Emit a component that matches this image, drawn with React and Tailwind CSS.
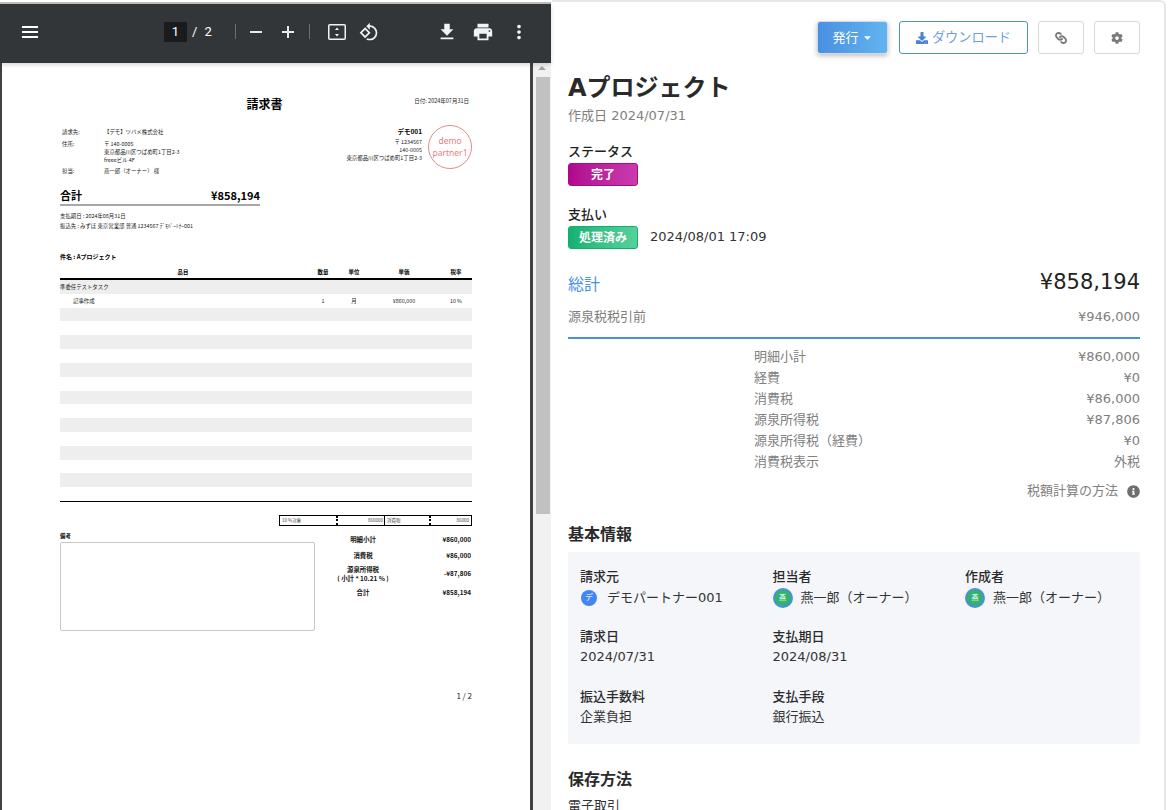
import React from "react";
import { FaDownload, FaLink, FaCog, FaInfoCircle, FaCaretDown } from "react-icons/fa";
import { MdFileDownload, MdPrint, MdMoreVert, MdRotate90DegreesCcw } from "react-icons/md";

const CJK = "font-['DejaVu_Sans','Noto_Sans_CJK_JP',sans-serif]";

function Toolbar() {
  return (
    <div className="h-[59px] pb-[4px] bg-[#323639] flex items-center text-white shrink-0 font-['Roboto','Noto_Sans_CJK_JP',sans-serif] relative z-10 shadow-[0_2px_4px_rgba(0,0,0,0.15)]">
      <svg className="ml-[22px] w-4 h-3" viewBox="0 0 16 12" fill="#fff">
        <rect width="16" height="2" /><rect y="5" width="16" height="2" /><rect y="10" width="16" height="2" />
      </svg>
      <div className="ml-[126px] w-[23px] h-5 bg-[#191b1c] flex items-center justify-center text-[13px]">1</div>
      <span className="ml-[5px] text-[13px]">/</span>
      <span className="ml-[7px] text-[13px]">2</span>
      <div className="ml-[23px] w-px h-[15px] bg-[#6b6f72]" />
      <svg className="ml-[14px] w-3 h-3" viewBox="0 0 12 12" fill="#e8eaed"><rect y="5" width="12" height="2" /></svg>
      <svg className="ml-5 w-3 h-3" viewBox="0 0 12 12" fill="#e8eaed"><rect y="5" width="12" height="2" /><rect x="5" width="2" height="12" /></svg>
      <div className="ml-[15px] w-px h-[15px] bg-[#6b6f72]" />
      <svg className="ml-[18px] w-[18px] h-4" viewBox="0 0 18 16" fill="none">
        <rect x="0.75" y="0.75" width="16.5" height="14.5" rx="1" stroke="#f1f3f4" strokeWidth="1.5" />
        <path d="M9 3.5l2 2.5H7zM9 12.5l2-2.5H7z" fill="#f1f3f4" />
      </svg>
      <MdRotate90DegreesCcw className="ml-[13px] text-[20px] text-[#f1f3f4]" />
      <MdFileDownload className="ml-[57px] text-[22px] text-[#f1f3f4]" />
      <MdPrint className="ml-[14px] text-[22px] text-[#f1f3f4]" />
      <MdMoreVert className="ml-[14px] text-[22px] text-[#f1f3f4]" />
    </div>
  );
}

function InvoiceTable() {
  const stripes = [0, 1, 2, 3, 4, 5, 6, 7, 8, 9, 10, 11, 12, 13, 14, 15];
  const cols = "grid grid-cols-[246px_34px_28px_72px_32px]";
  return (
    <div className="mt-[7px]">
      <div className={`${cols} text-[5.4px] font-bold text-center h-[9px] leading-[9px]`}>
        <span>品目</span><span>数量</span><span>単位</span><span>単価</span><span>税率</span>
      </div>
      <div className="h-[2px] bg-black mt-[1px]" />
      {stripes.map((i) => (
        <div key={i} className={`${cols} h-[13.82px] items-center text-[5.4px] text-center text-[#222] ${i % 2 === 0 ? "bg-[#eeeeee]" : "bg-white"}`}>
          {i === 0 && <span className="text-left">準委任テストタスク</span>}
          {i === 1 && (
            <>
              <span className="text-left pl-[13px]">記事作成</span>
              <span>1</span><span>月</span><span>¥860,000</span><span>10 %</span>
            </>
          )}
        </div>
      ))}
      <div className="h-[1px] bg-black" />
    </div>
  );
}

function TotalRow({ label, value, tall }) {
  return (
    <div className={`flex items-center ${tall ? "h-[20px]" : "h-[15px]"} mb-[1px] text-[6.4px] font-bold text-[#111]`}>
      <span className="w-[92px] text-center leading-[9px] whitespace-pre-line">{label}</span>
      <span className="flex-1 text-right">{value}</span>
    </div>
  );
}

function PdfPage() {
  return (
    <div className="w-[528px] ml-[2px] h-full bg-white px-[58px] pt-[34px] text-black overflow-hidden shrink-0 font-['Noto_Sans_CJK_JP','Noto_Sans',sans-serif]">
      <div className="relative h-[14px] text-center">
        <span className="text-[12px] leading-[14px] font-bold ml-[-1px] block mr-[2px]">請求書</span>
        <span className="absolute right-[3px] top-0 text-[5.5px] leading-[8px] text-[#222] whitespace-nowrap">日付: 2024年07月31日</span>
      </div>
      <div className="flex mt-[14px] h-[48px] text-[5.4px] leading-[8px] text-[#222]">
        <div className="w-[260px] pl-[2px] pt-[3px]">
          <div className="flex"><span className="w-[42px]">請求先:</span><span>【デモ】ツバメ株式会社</span></div>
          <div className="flex mt-[4px]"><span className="w-[42px]">住所:</span><span>〒 140-0005<br />東京都品川区つばめ町1丁目2-3<br />freeeビル 4F</span></div>
          <div className="flex mt-[3px]"><span className="w-[42px]">担当:</span><span>燕一郎（オーナー） 様</span></div>
        </div>
        <div className="w-[102px] text-right pt-[2px] whitespace-nowrap">
          <div className="text-[6.5px] font-bold leading-[9px] text-black mb-[2px]">デモ001</div>
          <div>〒 1234567</div><div>140-0005</div><div className="ml-[-40px]">東京都品川区つばめ町1丁目2-3</div>
        </div>
        <div className="ml-[6px] w-11 h-11 shrink-0 rounded-full border border-[#e08a8a] flex items-center justify-center text-center text-[8.5px] leading-[12px] text-[#e58080] font-['Noto_Sans',sans-serif]">demo<br />partner1</div>
      </div>
      <div className="w-[200px] mt-[15px] flex justify-between items-end border-b-2 border-[#a8a8a8] font-bold text-[11px] leading-[15px] pb-[1px]">
        <span>合計</span><span>¥858,194</span>
      </div>
      <div className="text-[5.4px] leading-[8px] mt-[6px] text-[#222]">支払期日 : 2024年08月31日</div>
      <div className="text-[5.4px] leading-[8px] mt-[2px] text-[#222]">振込先 : みずほ 東京営業部 普通 1234567 ﾃﾞﾓﾊﾟｰﾄﾅｰ001</div>
      <div className="text-[6px] leading-[9px] font-bold mt-[22px]">件名 : Aプロジェクト</div>
      <InvoiceTable />
      <div className="ml-[219px] mt-[13px] h-[11px] w-[193px] border border-black flex text-[4.5px] leading-[9px] text-[#444]">
        <div className="w-[105px] flex justify-between pl-[2px] pr-[1px] border-r border-black relative">
          <span>10 %対象</span><span>860000</span>
          <span className="absolute left-[56px] top-0 h-full border-l-2 border-dotted border-black" />
        </div>
        <div className="flex-1 flex justify-between pl-[2px] pr-[2px] relative">
          <span>消費税</span><span>86000</span>
          <span className="absolute left-[44px] top-0 h-full border-l-2 border-dotted border-black" />
        </div>
      </div>
      <div className="flex mt-[6px]">
        <div className="w-[255px]">
          <div className="text-[5.4px] leading-[8px] font-bold">備考</div>
          <div className="mt-[2px] h-[89px] border border-[#c8c8c8] rounded-[2px]" />
        </div>
        <div className="ml-[2px] flex-1 pr-[1px]">
          <TotalRow label="明細小計" value="¥860,000" />
          <TotalRow label="消費税" value="¥86,000" />
          <TotalRow label={"源泉所得税\n( 小計 * 10.21 % )"} value="-¥87,806" tall />
          <TotalRow label="合計" value="¥858,194" />
        </div>
      </div>
      <div className="text-right text-[8px] leading-[10px] mt-[60px] text-[#222]">1 / 2</div>
    </div>
  );
}

function Left() {
  return (
    <div className="w-[551px] shrink-0 flex flex-col h-full">
      <div className="h-[2px] bg-white shrink-0" />
      <div className="h-[2px] bg-[#bdbdbd] shrink-0" />
      <Toolbar />
      <div className="flex-1 flex bg-[#3f4245] min-h-0">
        <PdfPage />
        <div className="w-[18px] ml-[3px] bg-[#f1f1f1] flex flex-col items-center shrink-0">
          <div className="mt-[3px] w-0 h-0 border-x-[4px] border-x-transparent border-b-[4px] border-b-[#a3a3a3]" />
          <div className="mt-[7px] ml-[1px] w-[14px] h-[437px] bg-[#c1c1c1]" />
        </div>
      </div>
    </div>
  );
}

function Row({ label, value }) {
  return (
    <div className="flex justify-between h-[21px] leading-[21px] text-[13px] text-[#808080]">
      <span>{label}</span><span>{value}</span>
    </div>
  );
}

function Field({ label, avatar, children }) {
  return (
    <div className="h-[60px]">
      <div className="text-[13px] leading-[20px] font-medium text-[#2b2b2b]">{label}</div>
      <div className={`text-[13px] leading-[20px] text-[#333] flex items-center whitespace-nowrap ${avatar ? "h-[22px]" : "h-[20px]"}`}>{children}</div>
    </div>
  );
}

function GreenAvatar() {
  return (
    <span className="w-5 h-5 rounded-full bg-[#33b26e] border-2 border-[#4a8fe0] flex items-center justify-center text-[7px] leading-none text-white mr-[8px]">燕</span>
  );
}

function Right() {
  return (
    <div className={`ml-px w-[614px] shrink-0 h-full bg-white rounded-tr-md border-t-2 border-r-2 border-[#e6e7ea] pl-4 pr-6 overflow-hidden ${CJK}`}>
      <div className="flex justify-end mt-[19px] h-[33px] gap-[10px]">
        <button className="w-[71px] mr-px rounded-[3px] bg-gradient-to-r from-[#4a90e2] to-[#62b4ef] text-white text-[13px] flex items-center justify-center gap-[3px] shadow-[0_2px_5px_rgba(0,0,0,0.25)] border border-[#d4dce6]">
          発行<FaCaretDown className="text-[11px]" />
        </button>
        <button className="w-[129px] rounded-[3px] border border-[#4a90e2] text-[#6f9fe0] text-[13.2px] flex items-center justify-center gap-[4px] bg-white">
          <FaDownload className="text-[12px] text-[#4a7fd6]" />ダウンロード
        </button>
        <button className="w-[46px] rounded-[3px] border border-[#d8d8d8] flex items-center justify-center bg-white text-[#7a7a7a]">
          <FaLink className="text-[12px] rotate-90" />
        </button>
        <button className="w-[46px] rounded-[3px] border border-[#d8d8d8] flex items-center justify-center bg-white text-[#7a7a7a]">
          <FaCog className="text-[12px]" />
        </button>
      </div>
      <h1 className="mt-[18px] text-[24px] leading-[32px] font-bold text-[#2a2a2a]">Aプロジェクト</h1>
      <div className="mt-[2px] text-[13px] leading-[20px] text-[#808080]">作成日 2024/07/31</div>
      <div className="mt-[16px] text-[13px] leading-[20px] font-medium text-[#222]">ステータス</div>
      <div className="mt-[1px] w-[70px] h-[23px] rounded-[3px] bg-gradient-to-r from-[#b0068f] to-[#c93aad] border border-[#a80a88] text-white text-[12px] font-bold flex items-center justify-center">完了</div>
      <div className="mt-[19px] text-[13px] leading-[20px] font-medium text-[#222]">支払い</div>
      <div className="mt-[1px] flex items-center">
        <div className="w-[70px] h-[23px] rounded-[3px] bg-gradient-to-r from-[#10b272] to-[#56d19c] border border-[#12ad6f] text-white text-[12px] font-bold flex items-center justify-center">処理済み</div>
        <span className="ml-3 text-[13px] leading-[20px] mb-[2px] text-[#333]">2024/08/01 17:09</span>
      </div>
      <div className="mt-[17px] flex justify-between items-center h-[34px]">
        <span className="text-[16px] text-[#4a90e2] pt-[4px]">総計</span>
        <span className="text-[21px] leading-[34px] mb-[2px] text-[#222]">¥858,194</span>
      </div>
      <div className="mt-[7px] flex justify-between text-[13px] leading-[20px] text-[#808080]">
        <span>源泉税税引前</span><span>¥946,000</span>
      </div>
      <div className="mt-[10px] h-[2px] bg-[#4a90e2]" />
      <div className="mt-[7px] ml-[186px]">
        <Row label="明細小計" value="¥860,000" />
        <Row label="経費" value="¥0" />
        <Row label="消費税" value="¥86,000" />
        <Row label="源泉所得税" value="¥87,806" />
        <Row label="源泉所得税（経費）" value="¥0" />
        <Row label="消費税表示" value="外税" />
      </div>
      <div className="mt-[9px] flex justify-end items-center text-[13px] leading-[20px] text-[#808080]">
        税額計算の方法<FaInfoCircle className="ml-[9px] text-[13px] text-[#6f6f6f]" />
      </div>
      <h2 className="mt-[23px] text-[16px] leading-[22px] font-bold text-[#2a2a2a]">基本情報</h2>
      <div className="mt-[6px] bg-[#f4f6fa] h-[192px] px-3 pt-[15px] grid grid-cols-[192.5px_192.5px_1fr] content-start">
        <Field label="請求元" avatar>
          <span className="w-4 h-4 rounded-full bg-[#4285f4] text-white text-[8px] leading-none flex items-center justify-center ml-[1px] mr-[10px]">デ</span>
          デモパートナー001
        </Field>
        <Field label="担当者" avatar><GreenAvatar />燕一郎（オーナー）</Field>
        <Field label="作成者" avatar><GreenAvatar />燕一郎（オーナー）</Field>
        <Field label="請求日">2024/07/31</Field>
        <Field label="支払期日">2024/08/31</Field>
        <div />
        <Field label="振込手数料">企業負担</Field>
        <Field label="支払手段">銀行振込</Field>
      </div>
      <h2 className="mt-[25px] text-[16px] leading-[22px] font-bold text-[#2a2a2a]">保存方法</h2>
      <div className="mt-[5px] text-[13px] leading-[20px] text-[#333]">電子取引</div>
    </div>
  );
}

export default function App() {
  return (
    <div className="w-[1168px] h-[810px] flex overflow-hidden bg-white">
      <Left />
      <Right />
    </div>
  );
}
